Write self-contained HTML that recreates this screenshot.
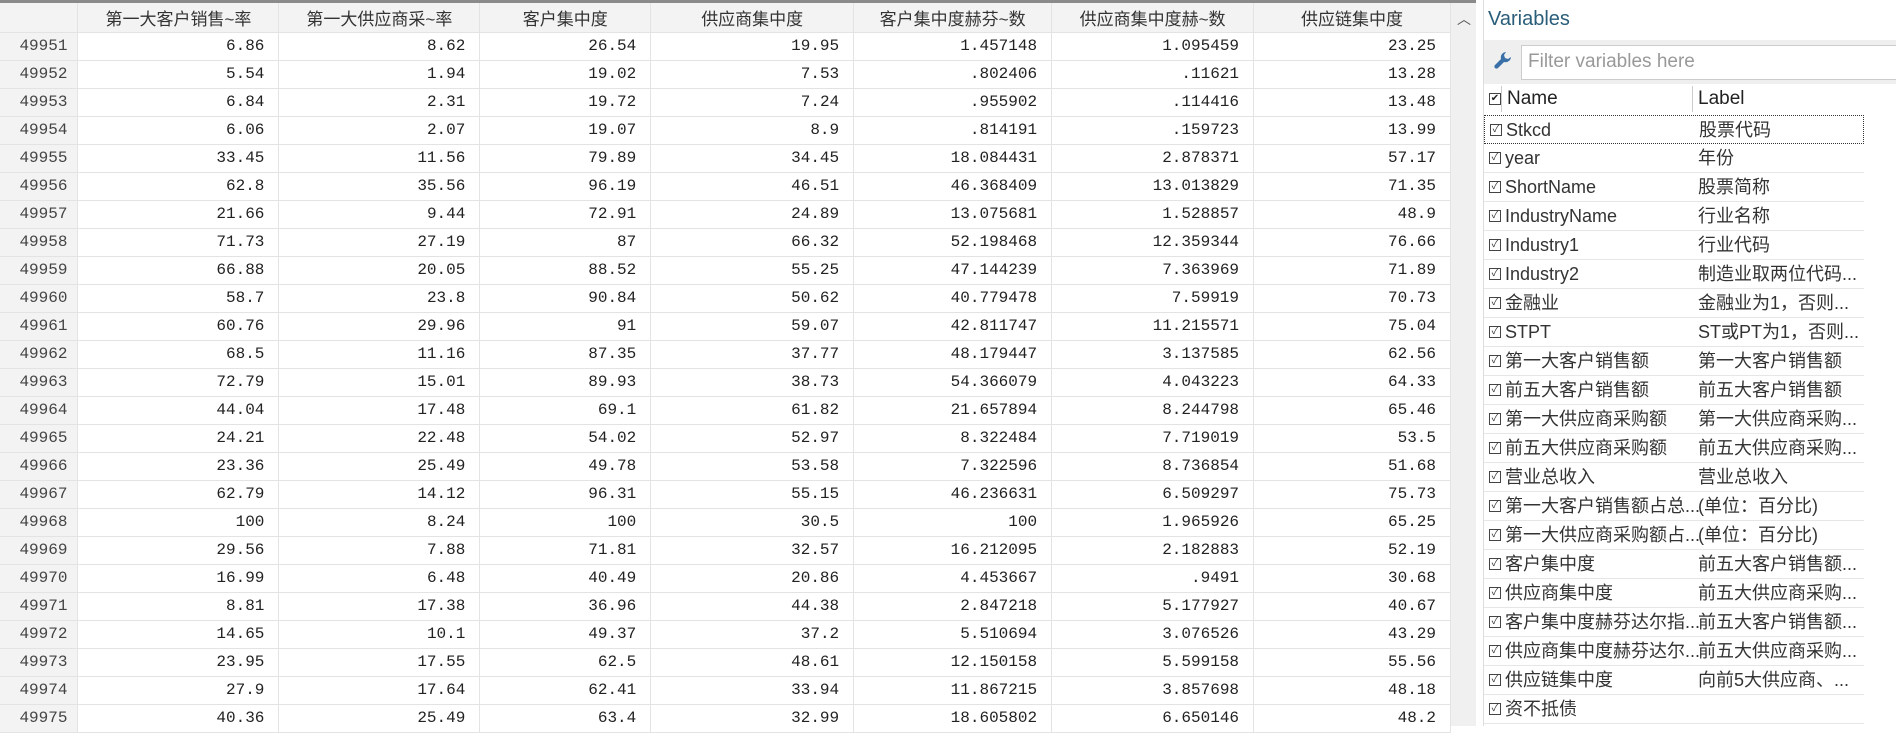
<!DOCTYPE html>
<html><head><meta charset="utf-8"><style>
*{margin:0;padding:0;box-sizing:border-box}
body{width:1896px;height:726px;overflow:hidden;background:#fff;position:relative;font-family:"Liberation Sans","Noto Sans CJK SC",sans-serif}
#grid{position:absolute;left:0;top:0;width:1451px;border-top:3px solid #8a8a8a}
table{border-collapse:collapse;table-layout:fixed}
td,th{height:28px;border-right:1px solid #e3e3e3;border-bottom:1px solid #e3e3e3;white-space:nowrap;overflow:hidden}
th{font-weight:normal;font-size:17px;color:#333;background:#f3f3f3;text-align:center;font-family:"Liberation Sans","Noto Sans CJK SC",sans-serif;height:29px}
td{font-family:"Liberation Mono",monospace;font-size:16px;color:#222;text-align:right;padding-right:14px}
td.n{background:#f3f3f3;color:#444;padding-right:10px}
#sb{position:absolute;left:1451px;top:0;width:25px;height:726px;background:#f0f0f0;border-top:3px solid #8a8a8a}
#sb span{position:absolute;left:6px;top:6px;font-size:14px;color:#555}
#panel{position:absolute;left:1483px;top:0;width:413px;height:726px;border-left:1px solid #ddd;background:#fff}
.title{position:absolute;left:4px;top:8px;font-size:20px;color:#2a5d7a}
.filt{position:absolute;left:0;top:40px;width:413px;height:44px;background:#efefef}
.box{position:absolute;left:37px;top:5px;right:0;height:35px;background:#fff;border:1px solid #ccc;font-size:19px;color:#999;padding:5px 6px}
.hdr{position:absolute;left:0;top:84px;width:413px;height:30px;font-size:19px;color:#222;line-height:30px}
.row{position:absolute;left:0;width:380px;height:29px;border-bottom:1px solid #e6e6e6;font-size:18px;color:#333;line-height:28px}
.cb{position:absolute;left:5px;top:8px;width:12px;height:12px;border:1px solid #444;font-size:10px;line-height:10px;text-align:center}
.nm{position:absolute;left:21px;top:0}
.lb{position:absolute;left:214px;top:0}
</style></head><body>
<div id="grid"><table>
<colgroup><col style="width:78px"><col style="width:201px"><col style="width:201px"><col style="width:171px"><col style="width:203px"><col style="width:198px"><col style="width:202px"><col style="width:197px"></colgroup>
<tr><th></th><th>第一大客户销售~率</th><th>第一大供应商采~率</th><th>客户集中度</th><th>供应商集中度</th><th>客户集中度赫芬~数</th><th>供应商集中度赫~数</th><th>供应链集中度</th></tr>
<tr><td class="n">49951</td><td>6.86</td><td>8.62</td><td>26.54</td><td>19.95</td><td>1.457148</td><td>1.095459</td><td>23.25</td></tr>
<tr><td class="n">49952</td><td>5.54</td><td>1.94</td><td>19.02</td><td>7.53</td><td>.802406</td><td>.11621</td><td>13.28</td></tr>
<tr><td class="n">49953</td><td>6.84</td><td>2.31</td><td>19.72</td><td>7.24</td><td>.955902</td><td>.114416</td><td>13.48</td></tr>
<tr><td class="n">49954</td><td>6.06</td><td>2.07</td><td>19.07</td><td>8.9</td><td>.814191</td><td>.159723</td><td>13.99</td></tr>
<tr><td class="n">49955</td><td>33.45</td><td>11.56</td><td>79.89</td><td>34.45</td><td>18.084431</td><td>2.878371</td><td>57.17</td></tr>
<tr><td class="n">49956</td><td>62.8</td><td>35.56</td><td>96.19</td><td>46.51</td><td>46.368409</td><td>13.013829</td><td>71.35</td></tr>
<tr><td class="n">49957</td><td>21.66</td><td>9.44</td><td>72.91</td><td>24.89</td><td>13.075681</td><td>1.528857</td><td>48.9</td></tr>
<tr><td class="n">49958</td><td>71.73</td><td>27.19</td><td>87</td><td>66.32</td><td>52.198468</td><td>12.359344</td><td>76.66</td></tr>
<tr><td class="n">49959</td><td>66.88</td><td>20.05</td><td>88.52</td><td>55.25</td><td>47.144239</td><td>7.363969</td><td>71.89</td></tr>
<tr><td class="n">49960</td><td>58.7</td><td>23.8</td><td>90.84</td><td>50.62</td><td>40.779478</td><td>7.59919</td><td>70.73</td></tr>
<tr><td class="n">49961</td><td>60.76</td><td>29.96</td><td>91</td><td>59.07</td><td>42.811747</td><td>11.215571</td><td>75.04</td></tr>
<tr><td class="n">49962</td><td>68.5</td><td>11.16</td><td>87.35</td><td>37.77</td><td>48.179447</td><td>3.137585</td><td>62.56</td></tr>
<tr><td class="n">49963</td><td>72.79</td><td>15.01</td><td>89.93</td><td>38.73</td><td>54.366079</td><td>4.043223</td><td>64.33</td></tr>
<tr><td class="n">49964</td><td>44.04</td><td>17.48</td><td>69.1</td><td>61.82</td><td>21.657894</td><td>8.244798</td><td>65.46</td></tr>
<tr><td class="n">49965</td><td>24.21</td><td>22.48</td><td>54.02</td><td>52.97</td><td>8.322484</td><td>7.719019</td><td>53.5</td></tr>
<tr><td class="n">49966</td><td>23.36</td><td>25.49</td><td>49.78</td><td>53.58</td><td>7.322596</td><td>8.736854</td><td>51.68</td></tr>
<tr><td class="n">49967</td><td>62.79</td><td>14.12</td><td>96.31</td><td>55.15</td><td>46.236631</td><td>6.509297</td><td>75.73</td></tr>
<tr><td class="n">49968</td><td>100</td><td>8.24</td><td>100</td><td>30.5</td><td>100</td><td>1.965926</td><td>65.25</td></tr>
<tr><td class="n">49969</td><td>29.56</td><td>7.88</td><td>71.81</td><td>32.57</td><td>16.212095</td><td>2.182883</td><td>52.19</td></tr>
<tr><td class="n">49970</td><td>16.99</td><td>6.48</td><td>40.49</td><td>20.86</td><td>4.453667</td><td>.9491</td><td>30.68</td></tr>
<tr><td class="n">49971</td><td>8.81</td><td>17.38</td><td>36.96</td><td>44.38</td><td>2.847218</td><td>5.177927</td><td>40.67</td></tr>
<tr><td class="n">49972</td><td>14.65</td><td>10.1</td><td>49.37</td><td>37.2</td><td>5.510694</td><td>3.076526</td><td>43.29</td></tr>
<tr><td class="n">49973</td><td>23.95</td><td>17.55</td><td>62.5</td><td>48.61</td><td>12.150158</td><td>5.599158</td><td>55.56</td></tr>
<tr><td class="n">49974</td><td>27.9</td><td>17.64</td><td>62.41</td><td>33.94</td><td>11.867215</td><td>3.857698</td><td>48.18</td></tr>
<tr><td class="n">49975</td><td>40.36</td><td>25.49</td><td>63.4</td><td>32.99</td><td>18.605802</td><td>6.650146</td><td>48.2</td></tr>
</table></div>
<div id="sb"><span>︿</span></div>
<div id="panel">
<div class="title">Variables</div>
<div class="filt"><svg style="position:absolute;left:8px;top:10px" width="22" height="22" viewBox="0 0 22 22"><path d="M14 2 A5.5 5.5 0 0 0 9 9 L3 15 A2 2 0 0 0 6 18 L12 12 A5.5 5.5 0 0 0 19 7 L16 9 L13 8 L12 5 Z" fill="#3a6fa8"/></svg><div class="box">Filter variables here</div></div>
<div class="hdr"><div class="cb" style="top:9px">✔</div><span style="position:absolute;left:23px;top:0">Name</span><span style="position:absolute;left:214px;top:0">Label</span><div style="position:absolute;left:17px;top:2px;width:1px;height:26px;background:#ccc"></div><div style="position:absolute;left:208px;top:2px;width:1px;height:26px;background:#ccc"></div></div>
<div class="row" style="top:115px;border:1px dotted #333"><div class="cb">✓</div><span class="nm">Stkcd</span><span class="lb">股票代码</span></div>
<div class="row" style="top:144px"><div class="cb">✓</div><span class="nm">year</span><span class="lb">年份</span></div>
<div class="row" style="top:173px"><div class="cb">✓</div><span class="nm">ShortName</span><span class="lb">股票简称</span></div>
<div class="row" style="top:202px"><div class="cb">✓</div><span class="nm">IndustryName</span><span class="lb">行业名称</span></div>
<div class="row" style="top:231px"><div class="cb">✓</div><span class="nm">Industry1</span><span class="lb">行业代码</span></div>
<div class="row" style="top:260px"><div class="cb">✓</div><span class="nm">Industry2</span><span class="lb">制造业取两位代码...</span></div>
<div class="row" style="top:289px"><div class="cb">✓</div><span class="nm">金融业</span><span class="lb">金融业为1，否则...</span></div>
<div class="row" style="top:318px"><div class="cb">✓</div><span class="nm">STPT</span><span class="lb">ST或PT为1，否则...</span></div>
<div class="row" style="top:347px"><div class="cb">✓</div><span class="nm">第一大客户销售额</span><span class="lb">第一大客户销售额</span></div>
<div class="row" style="top:376px"><div class="cb">✓</div><span class="nm">前五大客户销售额</span><span class="lb">前五大客户销售额</span></div>
<div class="row" style="top:405px"><div class="cb">✓</div><span class="nm">第一大供应商采购额</span><span class="lb">第一大供应商采购...</span></div>
<div class="row" style="top:434px"><div class="cb">✓</div><span class="nm">前五大供应商采购额</span><span class="lb">前五大供应商采购...</span></div>
<div class="row" style="top:463px"><div class="cb">✓</div><span class="nm">营业总收入</span><span class="lb">营业总收入</span></div>
<div class="row" style="top:492px"><div class="cb">✓</div><span class="nm">第一大客户销售额占总...</span><span class="lb">(单位：百分比)</span></div>
<div class="row" style="top:521px"><div class="cb">✓</div><span class="nm">第一大供应商采购额占...</span><span class="lb">(单位：百分比)</span></div>
<div class="row" style="top:550px"><div class="cb">✓</div><span class="nm">客户集中度</span><span class="lb">前五大客户销售额...</span></div>
<div class="row" style="top:579px"><div class="cb">✓</div><span class="nm">供应商集中度</span><span class="lb">前五大供应商采购...</span></div>
<div class="row" style="top:608px"><div class="cb">✓</div><span class="nm">客户集中度赫芬达尔指...</span><span class="lb">前五大客户销售额...</span></div>
<div class="row" style="top:637px"><div class="cb">✓</div><span class="nm">供应商集中度赫芬达尔...</span><span class="lb">前五大供应商采购...</span></div>
<div class="row" style="top:666px"><div class="cb">✓</div><span class="nm">供应链集中度</span><span class="lb">向前5大供应商、...</span></div>
<div class="row" style="top:695px"><div class="cb">✓</div><span class="nm">资不抵债</span></div>
</div>
</body></html>
